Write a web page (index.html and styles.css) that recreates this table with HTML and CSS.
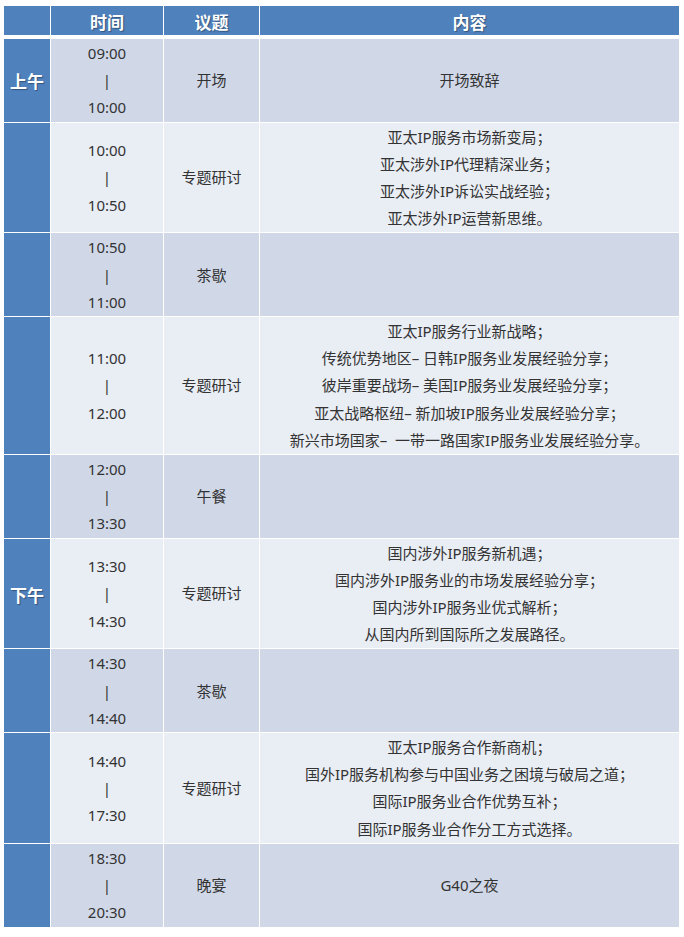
FILE: index.html
```html
<!DOCTYPE html>
<html lang="zh-CN">
<head>
<meta charset="utf-8">
<title>日程</title>
<link rel="stylesheet" href="styles.css">
</head>
<body>
<div class="schedule">
  <div class="head">
    <div class="hcell"></div>
    <div class="hcell">时间</div>
    <div class="hcell">议题</div>
    <div class="hcell">内容</div>
  </div>
  <div class="body">
    <div class="row dark">
      <div class="period">上午</div>
      <div class="cell"><span>09:00</span><span>|</span><span>10:00</span></div>
      <div class="cell">开场</div>
      <div class="cell">开场致辞</div>
    </div>
    <div class="row light">
      <div class="period"></div>
      <div class="cell"><span>10:00</span><span>|</span><span>10:50</span></div>
      <div class="cell">专题研讨</div>
      <div class="cell"><span>亚太IP服务市场新变局；</span><span>亚太涉外IP代理精深业务；</span><span>亚太涉外IP诉讼实战经验；</span><span>亚太涉外IP运营新思维。</span></div>
    </div>
    <div class="row dark">
      <div class="period"></div>
      <div class="cell"><span>10:50</span><span>|</span><span>11:00</span></div>
      <div class="cell">茶歇</div>
      <div class="cell"></div>
    </div>
    <div class="row light">
      <div class="period"></div>
      <div class="cell"><span>11:00</span><span>|</span><span>12:00</span></div>
      <div class="cell">专题研讨</div>
      <div class="cell"><span>亚太IP服务行业新战略；</span><span>传统优势地区– 日韩IP服务业发展经验分享；</span><span>彼岸重要战场– 美国IP服务业发展经验分享；</span><span>亚太战略枢纽– 新加坡IP服务业发展经验分享；</span><span>新兴市场国家–&nbsp; 一带一路国家IP服务业发展经验分享。</span></div>
    </div>
    <div class="row dark">
      <div class="period"></div>
      <div class="cell"><span>12:00</span><span>|</span><span>13:30</span></div>
      <div class="cell">午餐</div>
      <div class="cell"></div>
    </div>
    <div class="row light">
      <div class="period">下午</div>
      <div class="cell"><span>13:30</span><span>|</span><span>14:30</span></div>
      <div class="cell">专题研讨</div>
      <div class="cell"><span>国内涉外IP服务新机遇；</span><span>国内涉外IP服务业的市场发展经验分享；</span><span>国内涉外IP服务业优式解析；</span><span>从国内所到国际所之发展路径。</span></div>
    </div>
    <div class="row dark">
      <div class="period"></div>
      <div class="cell"><span>14:30</span><span>|</span><span>14:40</span></div>
      <div class="cell">茶歇</div>
      <div class="cell"></div>
    </div>
    <div class="row light">
      <div class="period"></div>
      <div class="cell"><span>14:40</span><span>|</span><span>17:30</span></div>
      <div class="cell">专题研讨</div>
      <div class="cell"><span>亚太IP服务合作新商机；</span><span>国外IP服务机构参与中国业务之困境与破局之道；</span><span>国际IP服务业合作优势互补；</span><span>国际IP服务业合作分工方式选择。</span></div>
    </div>
    <div class="row dark">
      <div class="period"></div>
      <div class="cell"><span>18:30</span><span>|</span><span>20:30</span></div>
      <div class="cell">晚宴</div>
      <div class="cell">G40之夜</div>
    </div>
  </div>
</div>
</body>
</html>
```
FILE: styles.css
```css
html, body {
  margin: 0;
  padding: 0;
  background: #ffffff;
}
body {
  padding: 6px 0 0 4px;
  font-family: "Noto Sans", "Noto Sans CJK SC", sans-serif;
  font-size: 15px;
  color: #333333;
}
.schedule {
  width: 675px;
  display: flex;
  flex-direction: column;
  gap: 4px;
}
.head, .row {
  display: grid;
  grid-template-columns: 46px 112px 95px 419px;
  column-gap: 1px;
}
.hcell {
  background: #4f81bd;
  height: 29px;
  display: flex;
  align-items: center;
  justify-content: center;
  padding-top: 2px;
  box-sizing: border-box;
  color: #ffffff;
  font-weight: bold;
  font-size: 17px;
  text-shadow: 1px 1px 1px rgba(0, 0, 0, 0.35);
}
.body {
  display: flex;
  flex-direction: column;
  gap: 1px;
}
.period {
  background: #4f81bd;
  display: flex;
  align-items: center;
  justify-content: center;
  padding-top: 1px;
  color: #ffffff;
  font-weight: bold;
  font-size: 17px;
  text-shadow: 1px 1px 1px rgba(0, 0, 0, 0.35);
}
.cell {
  display: flex;
  flex-direction: column;
  align-items: center;
  justify-content: center;
  text-align: center;
  line-height: 27.2px;
  padding: 1px 0 0;
}
.dark .cell { background: #d0d8e8; }
.light .cell { background: #e9edf4; }
```
